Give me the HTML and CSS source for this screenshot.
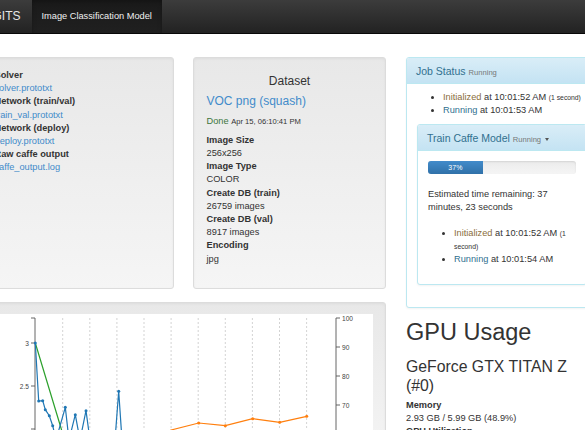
FILE: index.html
```html
<!DOCTYPE html>
<html>
<head>
<meta charset="utf-8">
<title>DIGITS - Image Classification Model</title>
<link rel="stylesheet" href="styles.css">
</head>
<body>
<nav class="navbar">
  <a class="brand">DIGITS</a>
  <span class="nav-item">Image Classification Model</span>
</nav>
<div class="main">
  <div class="left-col">
    <div class="top-row">
      <div class="well files">
        <dl>
          <dt>Solver</dt>
          <dd><a>solver.prototxt</a></dd>
          <dt>Network (train/val)</dt>
          <dd><a>train_val.prototxt</a></dd>
          <dt>Network (deploy)</dt>
          <dd><a>deploy.prototxt</a></dd>
          <dt>Raw caffe output</dt>
          <dd><a>caffe_output.log</a></dd>
        </dl>
      </div>
      <div class="well dataset">
        <h4 class="ds-title">Dataset</h4>
        <h4 class="ds-name"><a>VOC png (squash)</a></h4>
        <p class="ds-status"><span class="text-success">Done</span> <small>Apr 15, 06:10:41 PM</small></p>
        <dl>
          <dt>Image Size</dt>
          <dd>256x256</dd>
          <dt>Image Type</dt>
          <dd>COLOR</dd>
          <dt>Create DB (train)</dt>
          <dd>26759 images</dd>
          <dt>Create DB (val)</dt>
          <dd>8917 images</dd>
          <dt>Encoding</dt>
          <dd>jpg</dd>
        </dl>
      </div>
    </div>
    <div class="well chart-well">
      <div class="chart">
        <svg width="379" height="130" viewBox="0 0 379 130">
          <g class="grid">
            <line x1="67.7" y1="4" x2="67.7" y2="130"/>
            <line x1="94.8" y1="4" x2="94.8" y2="130"/>
            <line x1="121.9" y1="4" x2="121.9" y2="130"/>
            <line x1="149" y1="4" x2="149" y2="130"/>
            <line x1="176.1" y1="4" x2="176.1" y2="130"/>
            <line x1="203.2" y1="4" x2="203.2" y2="130"/>
            <line x1="230.3" y1="4" x2="230.3" y2="130"/>
            <line x1="257.4" y1="4" x2="257.4" y2="130"/>
            <line x1="284.5" y1="4" x2="284.5" y2="130"/>
            <line x1="311.6" y1="4" x2="311.6" y2="130"/>
          </g>
          <g class="axis">
            <line x1="40" y1="4" x2="40" y2="130"/>
            <line x1="36" y1="4" x2="40" y2="4"/>
            <line x1="36" y1="29" x2="40" y2="29"/>
            <line x1="36" y1="72" x2="40" y2="72"/>
            <line x1="36" y1="115" x2="40" y2="115"/>
            <line x1="341" y1="4" x2="341" y2="130"/>
            <line x1="341" y1="4" x2="345" y2="4"/>
            <line x1="341" y1="33" x2="345" y2="33"/>
            <line x1="341" y1="62" x2="345" y2="62"/>
            <line x1="341" y1="91" x2="345" y2="91"/>
            <line x1="341" y1="120" x2="345" y2="120"/>
          </g>
          <g class="tick-labels">
            <text x="34" y="31.5" text-anchor="end">3</text>
            <text x="34" y="74.5" text-anchor="end">2.5</text>
            <text x="347" y="6.5">100</text>
            <text x="347" y="35.5">90</text>
            <text x="347" y="64.5">80</text>
            <text x="347" y="93.5">70</text>
            <text x="347" y="122.5">60</text>
          </g>
          <polyline class="line-green" points="40.3,29 66,114 70,128"/>
          <polyline class="line-blue" points="40.3,29 43.7,87 47.7,86.7 50.3,95.7 54.3,101.7 57.7,111.7 61,126 70.3,93.3 74,126 80.3,100.7 85,126 91,96.7 95,126 120,126 123.7,77.3 127,126"/>
          <polyline class="line-orange" points="150,128 176.1,116 203.7,109 230.3,111.7 257.7,104.7 284.7,108.3 311.7,102.3"/>
          <g class="dots-blue">
            <circle cx="40.3" cy="29" r="1.5"/>
            <circle cx="43.7" cy="87" r="1.5"/>
            <circle cx="47.7" cy="86.7" r="1.5"/>
            <circle cx="50.3" cy="95.7" r="1.5"/>
            <circle cx="54.3" cy="101.7" r="1.5"/>
            <circle cx="57.7" cy="111.7" r="1.5"/>
            <circle cx="70.3" cy="93.3" r="1.5"/>
            <circle cx="80.3" cy="100.7" r="1.5"/>
            <circle cx="91" cy="96.7" r="1.5"/>
            <circle cx="123.7" cy="77.3" r="1.5"/>
          </g>
          <g class="dots-orange">
            <circle cx="203.7" cy="109" r="1.5"/>
            <circle cx="230.3" cy="111.7" r="1.5"/>
            <circle cx="257.7" cy="104.7" r="1.5"/>
            <circle cx="284.7" cy="108.3" r="1.5"/>
            <circle cx="311.7" cy="102.3" r="1.5"/>
          </g>
        </svg>
      </div>
    </div>
  </div>
  <div class="right-col">
    <div class="panel">
      <div class="panel-heading">
        <span class="panel-title">Job Status</span> <small class="muted">Running</small>
      </div>
      <div class="panel-body">
        <ul class="status-list">
          <li><span class="text-warning">Initialized</span> at 10:01:52 AM <small>(1 second)</small></li>
          <li><span class="text-info">Running</span> at 10:01:53 AM</li>
        </ul>
        <div class="panel inner">
          <div class="panel-heading">
            <span class="panel-title">Train Caffe Model</span> <small class="muted">Running <span class="caret"></span></small>
          </div>
          <div class="panel-body">
            <div class="progress"><div class="progress-bar" style="width: 37%">37%</div></div>
            <p class="eta">Estimated time remaining: 37 minutes, 23 seconds</p>
            <ul class="status-list">
              <li><span class="text-warning">Initialized</span> at 10:01:52 AM <small>(1 second)</small></li>
              <li><span class="text-info">Running</span> at 10:01:54 AM</li>
            </ul>
          </div>
        </div>
      </div>
    </div>
    <h1 class="gpu-title">GPU Usage</h1>
    <h3 class="gpu-name">GeForce GTX TITAN Z (#0)</h3>
    <dl class="gpu-stats">
      <dt>Memory</dt>
      <dd>2.93 GB / 5.99 GB (48.9%)</dd>
      <dt>GPU Utilization</dt>
      <dd>96%</dd>
    </dl>
  </div>
</div>
</body>
</html>
```

FILE: styles.css
```css
html, body {
  margin: 0;
  padding: 0;
  background: #fff;
  overflow: hidden;
}
body {
  font-family: "Liberation Sans", Arial, sans-serif;
  font-size: 9.24px;
  line-height: 13.2px;
  color: #333;
  width: 585px;
  height: 430px;
}
a {
  color: #428bca;
  text-decoration: none;
}

/* navbar */
.navbar {
  display: flex;
  height: 33px;
  border-bottom: 1px solid #080808;
  background: linear-gradient(to bottom, #3c3c3c 0%, #222 100%);
  white-space: nowrap;
}
.brand {
  margin-left: -19.5px;
  padding-right: 11px;
  font-size: 12px;
  line-height: 33px;
  color: #e6e6e6;
}
.nav-item {
  padding: 0 10px;
  line-height: 33px;
  color: #f0f0f0;
  background: linear-gradient(to bottom, #1a1a1a 0%, #202020 100%);
  box-shadow: inset 0 2px 4px rgba(0, 0, 0, .25);
}

/* layout */
.main {
  display: flex;
  padding-top: 23px;
}
.left-col {
  flex: none;
  width: 405px;
  margin-left: -19px;
}
.top-row {
  display: grid;
  grid-template-columns: 193px 193px;
  column-gap: 19px;
}
.right-col {
  flex: none;
  width: 192px;
  margin-left: 20px;
}

/* wells */
.well {
  box-sizing: border-box;
  padding: 11px 12.5px 12.5px;
  border: 1px solid #dcdcdc;
  border-radius: 3px;
  background: linear-gradient(to bottom, #e8e8e8 0%, #f5f5f5 100%);
  box-shadow: inset 0 1px 3px rgba(0, 0, 0, .05), 0 1px 0 rgba(255, 255, 255, .1);
}
dl {
  margin: 0;
}
dt {
  font-weight: bold;
}
dd {
  margin: 0;
}
.dataset dl {
  margin-bottom: 10px;
}
.ds-title {
  margin: 6px 0 6.6px;
  font-size: 12px;
  line-height: 13.2px;
  font-weight: normal;
  text-align: center;
}
.ds-name {
  margin: 0 0 6.6px;
  font-size: 12px;
  line-height: 13.2px;
  font-weight: normal;
}
.ds-status {
  margin: 0 0 6px;
}
.ds-status small {
  font-size: 7.6px;
}
.text-success {
  color: #3c763d;
}
.text-warning {
  color: #8a6d3b;
}
.text-info {
  color: #31708f;
}

/* chart */
.chart-well {
  margin-top: 13px;
  height: 160px;
}
.chart {
  background: #fff;
  height: 140px;
}
.chart svg {
  display: block;
}
.grid line {
  stroke: #c8c8c8;
  stroke-width: 0.8;
  stroke-dasharray: 2 2;
}
.axis line {
  stroke: #555;
  stroke-width: 0.9;
}
.tick-labels text {
  font-family: "Liberation Sans", Arial, sans-serif;
  font-size: 6.6px;
  fill: #444;
}
.line-blue, .line-green, .line-orange {
  fill: none;
  stroke-width: 1.2;
}
.line-blue {
  stroke: #1f77b4;
}
.line-green {
  stroke: #2ca02c;
}
.line-orange {
  stroke: #ff7f0e;
}
.dots-blue circle {
  fill: #1f77b4;
}
.dots-orange circle {
  fill: #ff7f0e;
}

/* panels */
.panel {
  border: 1px solid #bce8f1;
  border-radius: 3px;
  background: #fff;
  box-shadow: 0 1px 2px rgba(0, 0, 0, .05);
}
.panel-heading {
  height: 12px;
  padding: 6.6px 9px;
  font-size: 10.5px;
  line-height: 12px;
  color: #31708f;
  border-bottom: 1px solid #bce8f1;
  border-radius: 2px 2px 0 0;
  background: linear-gradient(to bottom, #d9edf7 0%, #c4e3f3 100%);
  white-space: nowrap;
}
.panel-title {
  font-size: 10.5px;
}
.muted {
  font-size: 7.6px;
  color: #777;
}
.caret {
  display: inline-block;
  width: 0;
  height: 0;
  margin-left: 2px;
  vertical-align: 1px;
  border-top: 3px solid #555;
  border-left: 2.5px solid transparent;
  border-right: 2.5px solid transparent;
}
.panel-body {
  padding: 7px 10px 10px;
}
.inner {
  margin-bottom: 12px;
}
.inner .panel-body {
  padding: 10px;
}
.status-list {
  margin: 0 0 6.6px;
  padding-left: 26px;
}
.status-list small {
  font-size: 6.8px;
}
.inner .status-list {
  margin: 0 0 7px;
}
.progress {
  height: 13px;
  margin-bottom: 13.2px;
  border-radius: 3px;
  overflow: hidden;
  background: linear-gradient(to bottom, #ebebeb 0%, #f5f5f5 100%);
  box-shadow: inset 0 1px 2px rgba(0, 0, 0, .1);
}
.progress-bar {
  height: 13px;
  line-height: 13px;
  font-size: 7px;
  color: #fff;
  text-align: center;
  background: linear-gradient(to bottom, #428bca 0%, #3071a9 100%);
}
.eta {
  margin: 0 0 13px;
}

/* gpu */
.gpu-title {
  margin: 11px 0 0;
  font-size: 23.5px;
  line-height: 26px;
  font-weight: normal;
}
.gpu-name {
  margin: 12px 0 4px;
  font-size: 15.8px;
  line-height: 19px;
  font-weight: normal;
}
```
